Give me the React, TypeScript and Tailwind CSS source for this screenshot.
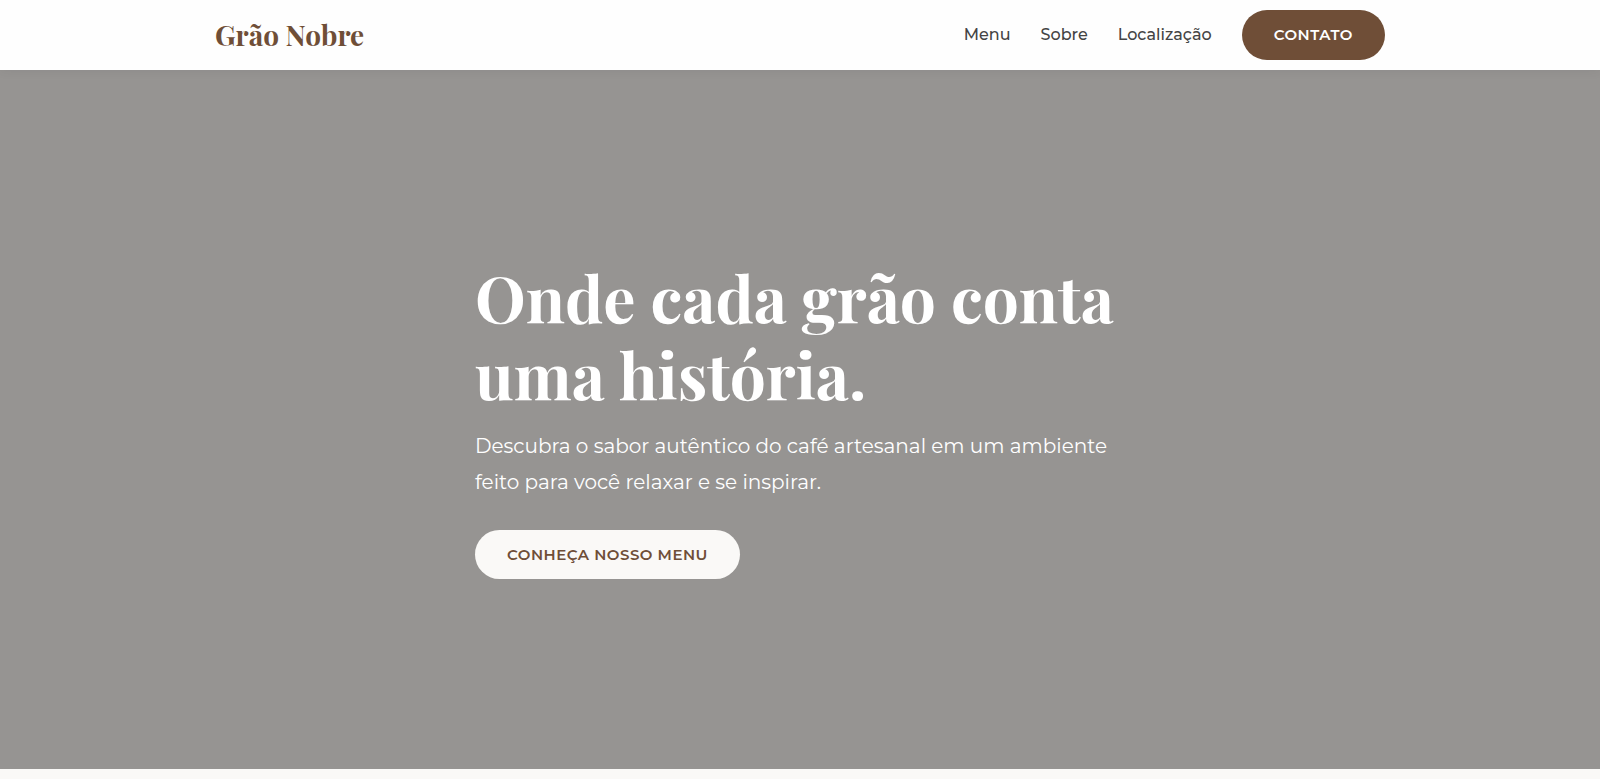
const navLinks = [
  { label: "Menu", href: "#menu" },
  { label: "Sobre", href: "#sobre" },
  { label: "Localização", href: "#localizacao" },
];

function Header() {
  return (
    <header className="sticky top-0 z-10 bg-[#fefefe] shadow-[0_2px_10px_rgba(0,0,0,0.05)]">
      <div className="mx-auto flex max-w-[1200px] items-center justify-between px-[15px] py-2.5">
        <a
          href="#inicio"
          className="font-['Playfair_Display','Liberation_Serif',serif] text-[28px] leading-10 font-bold text-[#6f4e37]"
        >
          Grão Nobre
        </a>
        <nav className="flex items-center gap-[30px] text-base font-medium text-[#444444]">
          {navLinks.map((link) => (
            <a key={link.href} href={link.href}>
              {link.label}
            </a>
          ))}
          <a
            href="#contato"
            className="rounded-full bg-[#6f4e37] px-8 py-[13px] text-[15px] leading-6 font-semibold tracking-[0.5px] text-white"
          >
            CONTATO
          </a>
        </nav>
      </div>
    </header>
  );
}

function Hero() {
  return (
    <section
      id="inicio"
      className="flex min-h-[calc(100vh-80px)] items-center justify-center bg-[#969492] px-4 pb-0.5"
    >
      <div className="w-full max-w-[650px] text-white">
        <h1 className="font-['Playfair_Display','Liberation_Serif',serif] text-[64px] leading-[77px] font-bold">
          Onde cada grão conta uma história.
        </h1>
        <p className="mt-4 text-xl leading-9">
          Descubra o sabor autêntico do café artesanal em um ambiente feito para você relaxar e se inspirar.
        </p>
        <a
          href="#menu"
          className="mt-[30px] inline-block rounded-full bg-[#faf9f7] px-8 py-3 text-[15px] leading-[25px] font-semibold tracking-[0.5px] text-[#6f4e37]"
        >
          CONHEÇA NOSSO MENU
        </a>
      </div>
    </section>
  );
}

export default function App() {
  return (
    <div className="min-h-screen bg-[#faf9f7] font-['Montserrat','Inter',sans-serif]">
      <Header />
      <main>
        <Hero />
      </main>
    </div>
  );
}
